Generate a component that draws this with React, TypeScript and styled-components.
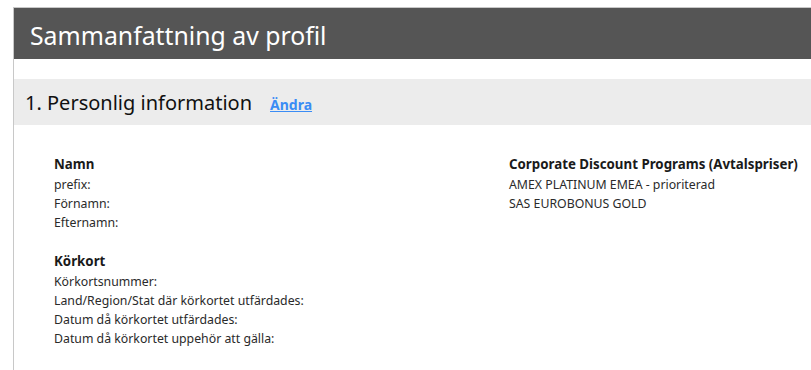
import * as React from 'react';
import styled, {createGlobalStyle} from 'styled-components';

const GlobalStyle = createGlobalStyle`
    html, body {
        margin: 0;
        padding: 0;
        background: #ffffff;
        font-family: "Noto Sans", Lato, sans-serif;
        color: #222222;
    }
`;

const StyledPage = styled.div`
    margin: 7px 0 0 13px;
    min-height: 363px;
    border-top: 1px solid #c8c8c8;
    border-left: 1px solid #c8c8c8;
    box-sizing: border-box;
`;

const StyledHeader = styled.div`
    display: flex;
    align-items: center;
    height: 51px;
    padding-left: 16px;
    background-color: #555555;
`;

const StyledTitle = styled.h1`
    margin: 2px 0 0;
    font-size: 24.8px;
    line-height: 30px;
    font-weight: 400;
    color: #ffffff;
`;

const StyledSectionBar = styled.div`
    display: flex;
    align-items: center;
    gap: 18px;
    height: 46px;
    margin-top: 20px;
    padding-left: 11px;
    background-color: #ececec;
`;

const StyledSectionTitle = styled.h2`
    margin: 2px 0 0;
    font-size: 20px;
    line-height: 24px;
    font-weight: 400;
    color: #111111;
`;

const StyledLink = styled.a`
    margin-top: 5px;
    font-size: 14px;
    line-height: 18px;
    font-weight: 700;
    color: #3a8cf5;
    text-decoration: underline;
    cursor: pointer;
`;

const StyledColumns = styled.div`
    display: grid;
    grid-template-columns: 455px 1fr;
    padding: 29px 0 0 40px;
`;

const StyledGroup = styled.div`
    display: flex;
    flex-direction: column;
    margin-bottom: 19px;
`;

const StyledGroupTitle = styled.div`
    font-size: 13.3px;
    font-weight: 700;
    line-height: 21px;
    color: #1a1a1a;
    white-space: nowrap;
`;

const StyledLine = styled.div`
    font-size: 12.3px;
    line-height: 19px;
    color: #2a2a2a;
    white-space: nowrap;
`;

interface GroupProps {
    title: string;
    lines: string[];
}

const Group = ({title, lines}: GroupProps) => (
    <StyledGroup>
        <StyledGroupTitle>{title}</StyledGroupTitle>
        {lines.map((line) => (
            <StyledLine key={line}>{line}</StyledLine>
        ))}
    </StyledGroup>
);

const App = () => {
    return (
        <>
            <GlobalStyle />
            <StyledPage>
                <StyledHeader>
                    <StyledTitle>Sammanfattning av profil</StyledTitle>
                </StyledHeader>
                <StyledSectionBar>
                    <StyledSectionTitle>1. Personlig information</StyledSectionTitle>
                    <StyledLink>Ändra</StyledLink>
                </StyledSectionBar>
                <StyledColumns>
                    <div>
                        <Group title="Namn" lines={['prefix:', 'Förnamn:', 'Efternamn:']} />
                        <Group
                            title="Körkort"
                            lines={[
                                'Körkortsnummer:',
                                'Land/Region/Stat där körkortet utfärdades:',
                                'Datum då körkortet utfärdades:',
                                'Datum då körkortet uppehör att gälla:',
                            ]}
                        />
                    </div>
                    <div>
                        <Group
                            title="Corporate Discount Programs (Avtalspriser)"
                            lines={['AMEX PLATINUM EMEA - prioriterad', 'SAS EUROBONUS GOLD']}
                        />
                    </div>
                </StyledColumns>
            </StyledPage>
        </>
    );
};

export default App;
